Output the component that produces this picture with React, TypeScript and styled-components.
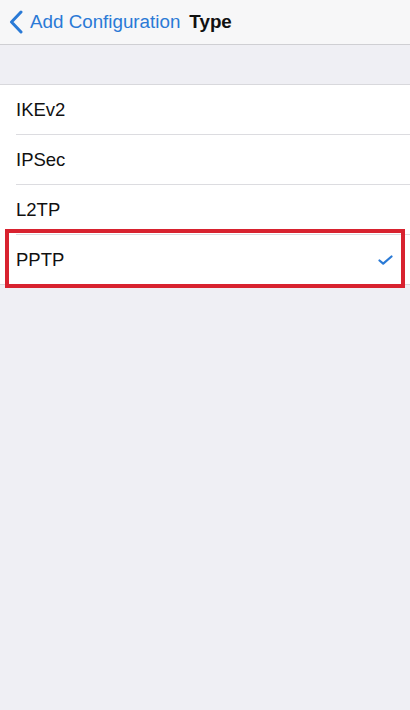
import React from "react";
import styled, { createGlobalStyle } from "styled-components";

const GlobalStyle = createGlobalStyle`
  html, body {
    margin: 0;
    padding: 0;
    background: #efeff4;
    font-family: "Liberation Sans", Arial, sans-serif;
  }
`;

const types = ["IKEv2", "IPSec", "L2TP", "PPTP"];

const App = () => {
  const selected = "PPTP";

  return (
    <Screen>
      <GlobalStyle />
      <NavBar>
        <BackButton>
          <svg width="14" height="24" viewBox="0 0 14 24">
            <path
              d="M12 2 L2.5 12 L12 22"
              fill="none"
              stroke="#2a7ad6"
              strokeWidth="3"
              strokeLinecap="round"
              strokeLinejoin="round"
            />
          </svg>
          <BackLabel>Add Configuration</BackLabel>
        </BackButton>
        <Title>Type</Title>
      </NavBar>
      <Spacer />
      <List>
        {types.map((t, i) => (
          <Row key={t} last={i === types.length - 1}>
            <RowLabel>{t}</RowLabel>
            {t === selected && (
              <svg width="15" height="10" viewBox="0 0 15 10">
                <path
                  d="M1.5 5.5 L5.2 8.6 L13.5 1.5"
                  fill="none"
                  stroke="#2a7ad6"
                  strokeWidth="2.2"
                  strokeLinecap="round"
                  strokeLinejoin="round"
                />
              </svg>
            )}
            {t === selected && <Highlight />}
          </Row>
        ))}
      </List>
    </Screen>
  );
};

const Screen = styled.div`
  width: 410px;
  min-height: 710px;
  background: #efeff4;
`;

const NavBar = styled.div`
  height: 44px;
  display: flex;
  align-items: center;
  gap: 9px;
  padding-left: 9px;
  background: #f7f7f8;
  border-bottom: 1px solid #cfcfd3;
`;

const BackButton = styled.div`
  display: flex;
  align-items: center;
  gap: 7px;
`;

const BackLabel = styled.span`
  font-size: 18.8px;
  color: #2a7ad6;
`;

const Title = styled.span`
  font-size: 18.8px;
  font-weight: bold;
  color: #111;
`;

const Spacer = styled.div`
  height: 39px;
  border-bottom: 1px solid #d8d8dc;
`;

const List = styled.div`
  background: #fff;
  border-bottom: 1px solid #d8d8dc;
`;

const Row = styled.div<{ last?: boolean }>`
  position: relative;
  height: 49px;
  margin-left: 16px;
  padding-right: 17px;
  display: flex;
  align-items: center;
  justify-content: space-between;
  border-bottom: ${(p) => (p.last ? "none" : "1px solid #dcdce0")};
`;

const RowLabel = styled.span`
  font-size: 18.5px;
  color: #111;
`;

const Highlight = styled.div`
  position: absolute;
  left: -11px;
  right: 5px;
  top: -6px;
  bottom: -4px;
  border: 4px solid #d8222f;
  pointer-events: none;
`;

export default App;
